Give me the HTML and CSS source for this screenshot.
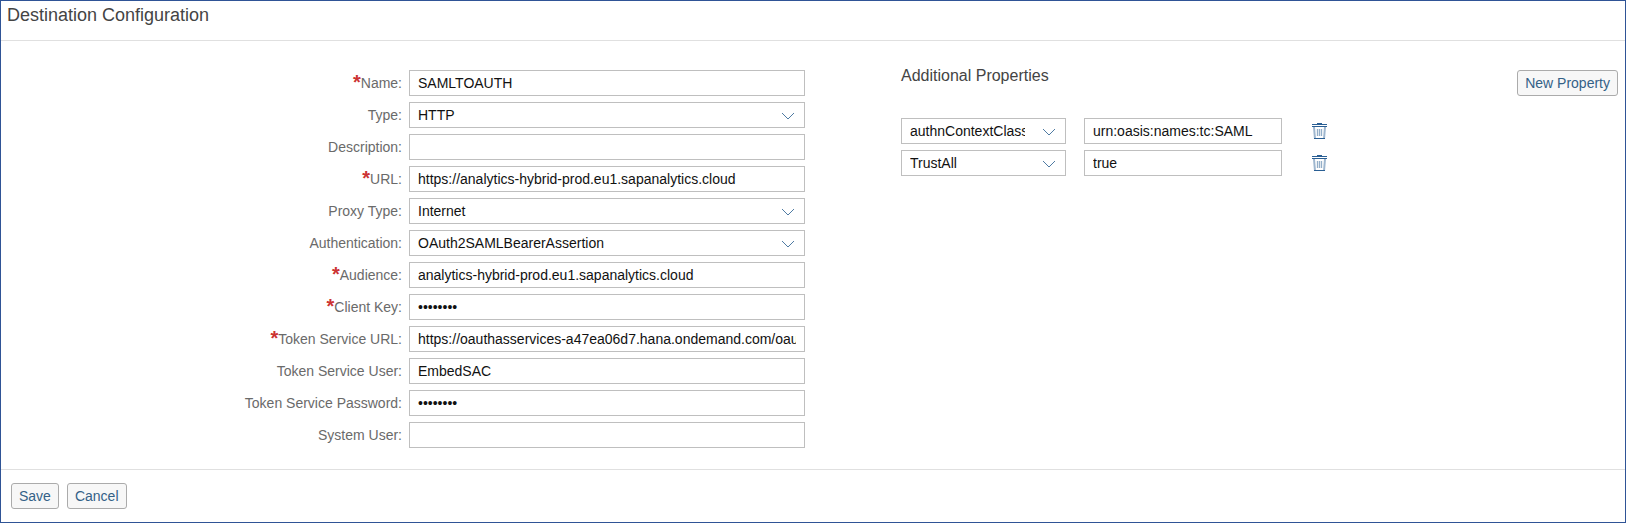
FILE: index.html
```html
<!DOCTYPE html>
<html lang="en">
<head>
<meta charset="utf-8">
<title>Destination Configuration</title>
<link rel="stylesheet" href="styles.css">
</head>
<body>
<svg class="symbols" aria-hidden="true">
  <symbol id="chevron" viewBox="0 0 14 8"><path d="M1 1l6 6 6-6" fill="none" stroke="currentColor" stroke-width="1"/></symbol>
  <symbol id="trash" viewBox="0 0 15 17">
    <path d="M5 .5h5M0 1.500h15M0 3.500h15" fill="none" stroke="currentColor" stroke-width="1"/>
    <path d="M2 4l1 12M13 4l-1 12" fill="none" stroke="currentColor" stroke-width="2" opacity=".45"/>
    <path d="M2 15.500h11" fill="none" stroke="currentColor" stroke-width="1"/>
    <path d="M5.500 6v7M7.500 6v7M9.500 6v7" fill="none" stroke="currentColor" stroke-width="1.300" opacity=".5"/>
  </symbol>
</svg>
<form class="dialog">
  <header class="dialog-header"><h1 class="title">Destination Configuration</h1></header>
  <main class="content">
    <div class="fields">
      <label class="label required" for="name">Name:</label>
      <input class="control" id="name" type="text" value="SAMLTOAUTH">
      <label class="label" for="type">Type:</label>
      <div class="select-box"><select class="control" id="type"><option>HTTP</option></select><svg class="chevron"><use href="#chevron"/></svg></div>
      <label class="label" for="description">Description:</label>
      <input class="control" id="description" type="text">
      <label class="label required" for="url">URL:</label>
      <input class="control" id="url" type="text" value="https://analytics-hybrid-prod.eu1.sapanalytics.cloud">
      <label class="label" for="proxy">Proxy Type:</label>
      <div class="select-box"><select class="control" id="proxy"><option>Internet</option></select><svg class="chevron"><use href="#chevron"/></svg></div>
      <label class="label" for="auth">Authentication:</label>
      <div class="select-box"><select class="control" id="auth"><option>OAuth2SAMLBearerAssertion</option></select><svg class="chevron"><use href="#chevron"/></svg></div>
      <label class="label required" for="audience">Audience:</label>
      <input class="control" id="audience" type="text" value="analytics-hybrid-prod.eu1.sapanalytics.cloud">
      <label class="label required" for="client-key">Client Key:</label>
      <input class="control" id="client-key" type="password" value="password">
      <label class="label required" for="token-url">Token Service URL:</label>
      <input class="control" id="token-url" type="text" value="https://oauthasservices-a47ea06d7.hana.ondemand.com/oauth2/api/v1/token">
      <label class="label" for="token-user">Token Service User:</label>
      <input class="control" id="token-user" type="text" value="EmbedSAC">
      <label class="label" for="token-password">Token Service Password:</label>
      <input class="control" id="token-password" type="password" value="password">
      <label class="label" for="system-user">System User:</label>
      <input class="control" id="system-user" type="text">
    </div>
    <section class="properties">
      <div class="properties-header">
        <h2 class="subtitle">Additional Properties</h2>
        <button class="button" type="button">New Property</button>
      </div>
      <div class="property-rows">
        <div class="select-box"><select class="control" aria-label="Property 1"><option>authnContextClassRef</option></select><svg class="chevron"><use href="#chevron"/></svg></div>
        <input class="control" type="text" aria-label="Value 1" value="urn:oasis:names:tc:SAML">
        <button class="delete" type="button" aria-label="Delete property 1"><svg class="trash"><use href="#trash"/></svg></button>
        <div class="select-box"><select class="control" aria-label="Property 2"><option>TrustAll</option></select><svg class="chevron"><use href="#chevron"/></svg></div>
        <input class="control" type="text" aria-label="Value 2" value="true">
        <button class="delete" type="button" aria-label="Delete property 2"><svg class="trash"><use href="#trash"/></svg></button>
      </div>
    </section>
  </main>
  <footer class="dialog-footer">
    <button class="button" type="button">Save</button>
    <button class="button" type="button">Cancel</button>
  </footer>
</form>
</body>
</html>
```
FILE: styles.css
```css
* {
  box-sizing: border-box;
}

body {
  margin: 0;
  background: #fff;
  font: 14px/16px "Liberation Sans", Arial, sans-serif;
}

.symbols {
  display: none;
}

.dialog {
  display: flex;
  flex-direction: column;
  min-height: 100vh;
  border: 1px solid #2f5496;
}

.dialog-header {
  padding: 4px 6px 15px;
  border-bottom: 1px solid #e0e0e0;
}

.title,
.subtitle {
  margin: 0;
  color: #444;
  font-weight: 400;
}

.title {
  font-size: 18px;
  line-height: 20px;
}

.subtitle {
  font-size: 16px;
  line-height: 12px;
}

.content {
  display: grid;
  flex: 1;
  grid-template-columns: minmax(0, 804fr) minmax(0, 717fr);
  align-items: start;
  gap: 96px;
  padding: 29px 7px 20px 0;
}

.fields {
  display: grid;
  grid-template-columns: minmax(0, 401fr) minmax(0, 396fr);
  align-items: center;
  gap: 6px 7px;
}

.label {
  color: #6a6a6a;
  text-align: right;
}

.required::before {
  content: "*";
  color: #cc3333;
  font-size: 20px;
  font-weight: 700;
  line-height: 0;
  vertical-align: -1px;
}

.control {
  display: block;
  width: 100%;
  height: 26px;
  margin: 0;
  padding: 0 8px;
  border: 1px solid #bfbfbf;
  border-radius: 0;
  outline: 0;
  background: #fff;
  color: #111;
  font: inherit;
}

.select-box {
  position: relative;
}

select.control {
  padding-right: 40px;
  appearance: none;
  text-overflow: clip;
}

.chevron {
  position: absolute;
  top: 10px;
  right: 10px;
  width: 14px;
  height: 8px;
  color: #4f7ba3;
  pointer-events: none;
}

.properties {
  display: grid;
  gap: 22px;
}

.properties-header {
  display: flex;
  align-items: flex-start;
  justify-content: space-between;
}

.property-rows {
  display: grid;
  grid-template-columns: minmax(0, 165fr) minmax(0, 198fr) minmax(0, 318fr);
  gap: 6px 18px;
}

.delete {
  display: flex;
  align-items: center;
  justify-self: start;
  padding: 0 12px;
  border: 0;
  background: none;
  color: #2a5f94;
}

.trash {
  width: 15px;
  height: 17px;
}

.button {
  height: 26px;
  padding: 0 7px;
  border: 1px solid #ababab;
  border-radius: 3px;
  background: #f7f7f7;
  color: #346187;
  font: inherit;
}

.dialog-footer {
  display: flex;
  gap: 8px;
  padding: 13px 10px;
  border-top: 1px solid #e0e0e0;
}
```
